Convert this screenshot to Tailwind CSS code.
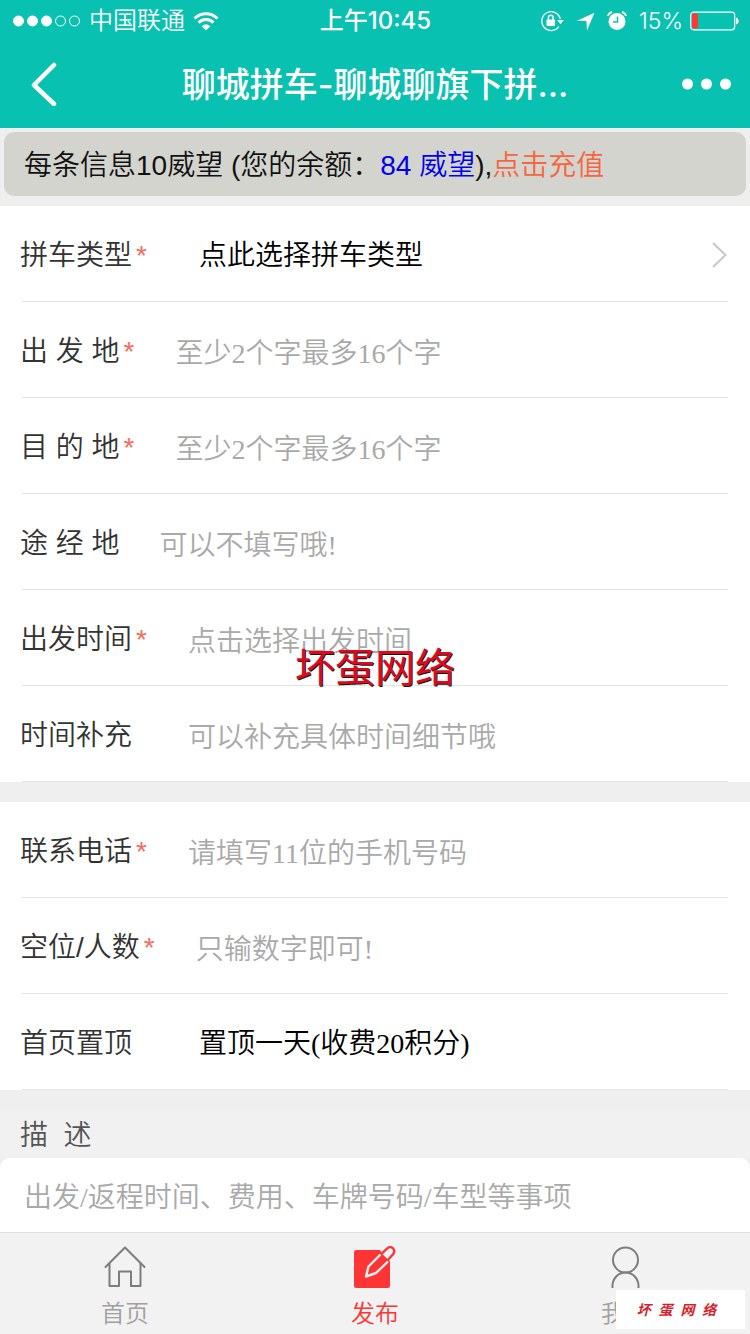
<!DOCTYPE html>
<html lang="zh-CN">
<head>
    <meta charset="UTF-8">
    <meta name="viewport" content="width=device-width, initial-scale=1.0">
    <title>聊城拼车</title>
    <script src="https://cdn.jsdelivr.net/npm/@tailwindcss/browser@4"></script>
</head>
<body class="relative min-h-screen flex flex-col bg-[#efefef] font-['Liberation_Sans','Noto_Sans_CJK_SC',sans-serif] font-[350] text-[28px] leading-10 text-[#333333]">

    <header class="bg-[#09c1b0] text-white">
        <!-- status bar -->
        <div class="h-10 pt-0.5 pl-3 pr-[11px] flex items-center text-2xl font-['Inter','Noto_Sans_CJK_SC',sans-serif]">
            <div class="flex-1 flex items-center">
                <svg class="w-[70px] h-3 mr-[7px]" viewBox="0 0 70 12" fill="#fff" stroke="#fff">
                    <circle cx="6.5" cy="6" r="5"/>
                    <circle cx="20.5" cy="6" r="5"/>
                    <circle cx="34.5" cy="6" r="5"/>
                    <circle cx="48.5" cy="6" r="5" fill="none"/>
                    <circle cx="62.5" cy="6" r="5" fill="none"/>
                </svg>
                <span>中国联通</span>
                <svg class="w-[26px] h-[19px] ml-2" viewBox="0 0 26 19" fill="none" stroke="#fff" stroke-width="3">
                    <path d="M1.5 6.5C8 .2 18 .2 24.500 6.500"/>
                    <path d="M5.500 10.600c4.300-4 10.700-4 15 0"/>
                    <path d="M13 18.500l-4.300-4.300c2.500-2.200 6.100-2.200 8.600 0z" fill="#fff" stroke="none"/>
                </svg>
            </div>
            <div class="font-medium">上午10:45</div>
            <div class="flex-1 flex items-center justify-end">
                <svg class="w-6 h-[22px] mr-3" viewBox="0 0 24 22" fill="none" stroke="#fff" stroke-width="1.300">
                    <path d="M18.800 16.600A9.400 9.400 0 1 1 20.300 9"/>
                    <path d="M17.200 10h6.600l-3.300 4.200z" fill="#fff" stroke="none"/>
                    <rect x="6.500" y="9.500" width="8.500" height="6.500" rx="1" fill="#fff" stroke="none"/>
                    <path d="M8.400 10V7.500a2.350 2.350 0 0 1 4.700 0V10" stroke-width="1.500"/>
                </svg>
                <svg class="w-[19px] h-[19px] mr-3" viewBox="0 0 19 19" fill="#fff">
                    <path d="M18.500.8L11 18.500l-.6-9.400L.5 9z"/>
                </svg>
                <svg class="w-5 h-5 mr-3" viewBox="0 0 20 20" fill="none" stroke="#fff">
                    <circle cx="10" cy="10.500" r="8.500" fill="#fff" stroke="none"/>
                    <path d="M.8 5C1.500 3 3 1.500 5 .8M19.200 5C18.500 3 17 1.500 15 .8" stroke-width="1.800"/>
                    <path d="M10.500 5.500V11H6" stroke="#09c1b0" stroke-width="1.500"/>
                </svg>
                <span class="text-[23px] font-light">15%</span>
                <svg class="w-[50px] h-5 ml-1.5" viewBox="0 0 50 20">
                    <rect x="1.700" y="1.200" width="44" height="17.600" rx="3" fill="none" stroke="#fff" stroke-width="1.200"/>
                    <rect x="3" y="2.500" width="6" height="15" rx="1" fill="#fb3b30"/>
                    <path d="M47 6.500c3.500.5 3.500 6.500 0 7z" fill="#fff"/>
                </svg>
            </div>
        </div>
        <div class="h-[88px] px-[18px] flex items-center justify-between">
            <button class="w-[50px] pl-3" aria-label="返回">
                <svg class="w-[28px] h-11" viewBox="0 0 28 44" fill="none" stroke="#fff" stroke-width="4.500" stroke-linecap="round" stroke-linejoin="round">
                    <path d="M24 3L4 23l20 19"/>
                </svg>
            </button>
            <h1 class="pt-0.5 text-[34px] font-medium font-['Inter','Noto_Sans_CJK_SC',sans-serif]">聊城拼车-聊城聊旗下拼...</h1>
            <button class="w-[50px]" aria-label="更多">
                <svg class="w-[50px] h-3" viewBox="0 0 50 12" fill="#fff">
                    <circle cx="5.500" cy="6" r="5.500"/>
                    <circle cx="24.500" cy="6" r="5.500"/>
                    <circle cx="43.500" cy="6" r="5.500"/>
                </svg>
            </button>
        </div>
    </header>

    <p class="mx-1 mt-1 mb-2.5 h-16 pt-1 px-5 flex items-center rounded-[10px] bg-[#d3d4ce] text-[#111111] whitespace-pre">每条信息10威望 (您的余额：<span class="text-[#0000ee]">84 威望</span>),<a href="#" class="text-[#f76540]">点击充值</a></p>

    <form class="flex-1 flex flex-col">
        <section class="bg-white px-[22px]">
            <div class="h-24 pt-1 flex items-center border-b border-[#e3e3e3]">
                <label for="type" class="-ml-0.5 pr-10 flex">拼车类型<span class="w-4 pl-1 text-[#fb6b5b]">*</span></label>
                <select id="type" class="flex-1 pl-[11px] appearance-none bg-transparent text-black font-['Liberation_Serif','Noto_Sans_CJK_SC',serif]">
                    <option>点此选择拼车类型</option>
                </select>
                <svg class="w-4 h-7" viewBox="0 0 16 28" fill="none" stroke="#c7c7cc" stroke-width="2">
                    <path d="M1 1l12.500 12L1 25"/>
                </svg>
            </div>
            <div class="h-24 pt-1 flex items-center border-b border-[#e3e3e3]">
                <label for="from" class="-ml-0.5 pr-10 flex">出 发 地<span class="w-4 pl-1 text-[#fb6b5b]">*</span></label>
                <input id="from" type="text" placeholder="至少2个字最多16个字" class="flex-1 min-w-0 pt-1 outline-none placeholder:text-[#a9a9a9] font-['Liberation_Serif','Noto_Sans_CJK_SC',serif]">
            </div>
            <div class="h-24 pt-1 flex items-center border-b border-[#e3e3e3]">
                <label for="to" class="-ml-0.5 pr-10 flex">目 的 地<span class="w-4 pl-1 text-[#fb6b5b]">*</span></label>
                <input id="to" type="text" placeholder="至少2个字最多16个字" class="flex-1 min-w-0 pt-1 outline-none placeholder:text-[#a9a9a9] font-['Liberation_Serif','Noto_Sans_CJK_SC',serif]">
            </div>
            <div class="h-24 pt-1 flex items-center border-b border-[#e3e3e3]">
                <label for="via" class="-ml-0.5 pr-10 flex">途 经 地</label>
                <input id="via" type="text" placeholder="可以不填写哦!" class="flex-1 min-w-0 pt-1 outline-none placeholder:text-[#a9a9a9] font-['Liberation_Serif','Noto_Sans_CJK_SC',serif]">
            </div>
            <div class="relative h-24 pt-1 flex items-center border-b border-[#e3e3e3]">
                <label for="time" class="-ml-0.5 pr-10 flex">出发时间<span class="w-4 pl-1 text-[#fb6b5b]">*</span></label>
                <input id="time" type="text" placeholder="点击选择出发时间" class="flex-1 min-w-0 pt-1 outline-none placeholder:text-[#a9a9a9] font-['Liberation_Serif','Noto_Sans_CJK_SC',serif]">
                <!-- watermark -->
                <div class="absolute inset-x-0 top-14 text-center text-[40px] leading-[44px] font-normal text-[#e0081c] [text-shadow:1px_1px_0_#111111] pointer-events-none">坏蛋网络</div>
            </div>
            <div class="h-24 pt-1 flex items-center border-b border-[#e3e3e3]">
                <label for="note" class="-ml-0.5 pr-14 flex">时间补充</label>
                <input id="note" type="text" placeholder="可以补充具体时间细节哦" class="flex-1 min-w-0 pt-1 outline-none placeholder:text-[#a9a9a9] font-['Liberation_Serif','Noto_Sans_CJK_SC',serif]">
            </div>
        </section>

        <section class="mt-5 bg-white px-[22px]">
            <div class="h-24 pt-1 flex items-center border-b border-[#e3e3e3]">
                <label for="phone" class="-ml-0.5 pr-10 flex">联系电话<span class="w-4 pl-1 text-[#fb6b5b]">*</span></label>
                <input id="phone" type="tel" placeholder="请填写11位的手机号码" class="flex-1 min-w-0 pt-1 outline-none placeholder:text-[#a9a9a9] font-['Liberation_Serif','Noto_Sans_CJK_SC',serif]">
            </div>
            <div class="h-24 pt-1 flex items-center border-b border-[#e3e3e3]">
                <label for="seats" class="-ml-0.5 pr-10 flex">空位/人数<span class="w-4 pl-1 text-[#fb6b5b]">*</span></label>
                <input id="seats" type="text" placeholder="只输数字即可!" class="flex-1 min-w-0 pt-1 outline-none placeholder:text-[#a9a9a9] font-['Liberation_Serif','Noto_Sans_CJK_SC',serif]">
            </div>
            <div class="h-24 pt-1 flex items-center border-b border-[#e3e3e3]">
                <label for="top" class="-ml-0.5 pr-14 flex">首页置顶</label>
                <select id="top" class="flex-1 pl-[11px] appearance-none bg-transparent text-black font-['Liberation_Serif','Noto_Sans_CJK_SC',serif]">
                    <option>置顶一天(收费20积分)</option>
                </select>
            </div>
        </section>

        <label for="desc" class="mt-5 h-12 px-5 pt-1.5 bg-[#f1f1f1] text-[#555555]">描&nbsp;&nbsp;述</label>
        <textarea id="desc" rows="1" placeholder="出发/返程时间、费用、车牌号码/车型等事项" class="flex-1 px-6 pt-5 rounded-t-[10px] bg-white outline-none resize-none placeholder:text-[#a9a9a9] font-['Liberation_Serif','Noto_Sans_CJK_SC',serif]"></textarea>
    </form>

    <nav class="relative h-[102px] grid grid-cols-3 bg-[#f2f2f2] border-t border-[#e3e3e3] text-2xl text-[#a0a0a0]">
        <a href="#" class="pt-[13px] flex flex-col items-center gap-2">
            <svg class="w-[42px] h-[42px]" viewBox="0 0 42 42" fill="none" stroke="#7d7d7d" stroke-width="2" stroke-linejoin="round" stroke-linecap="round">
                <path d="M1.500 21L21 1.500 40.500 21"/>
                <path d="M5.500 17.500V40h9.500V25.500h12V40h9.500V17.500"/>
            </svg>
            <span class="leading-9">首页</span>
        </a>
        <a href="#" class="pt-[13px] flex flex-col items-center gap-2 text-[#ff3535]">
            <svg class="w-[42px] h-[42px]" viewBox="0 0 42 42">
                <rect y="4" width="36" height="38" rx="2.500" fill="#ff3535"/>
                <path d="M25 2.500l3 4.500 7.500 8 3 2V2.500z" fill="#f2f2f2"/>
                <path d="M26.500 8.500L14.500 20.500 12 30.500l10-3.500L34 15.500" fill="#ff3535" stroke="#f2f2f2" stroke-width="2.400" stroke-linejoin="round"/>
                <path d="M27.800 7.800L33 2.700c2-2 4.400-1.800 6-.3 1.700 1.600 1.800 4 0 5.900L34.300 13.500z" fill="#f2f2f2"/>
                <path d="M27.200 8.200L33 2.700c2-2 4.400-1.800 6-.3 1.700 1.600 1.800 4 0 5.900L33.700 14.300" fill="none" stroke="#ff3535" stroke-width="2.400"/>
                <path d="M28 10l4.500 4.500" stroke="#ff3535" stroke-width="2"/>
            </svg>
            <span class="leading-9">发布</span>
        </a>
        <a href="#" class="pt-[13px] flex flex-col items-center gap-2">
            <svg class="w-[42px] h-[42px]" viewBox="0 0 42 42" fill="none" stroke="#7d7d7d" stroke-width="2">
                <circle cx="21.500" cy="14" r="12.500"/>
                <path d="M8.500 42v-2c0-7.500 5.500-13.500 13-13.500s13 6 13 13.500v2"/>
            </svg>
            <span class="leading-9">我的</span>
        </a>
        <div class="absolute right-[5px] bottom-[5px] w-[129px] h-[39px] pr-2 flex items-center justify-center bg-white text-sm font-bold italic text-[#d81e2c]">坏&nbsp;&nbsp;蛋&nbsp;&nbsp;网&nbsp;&nbsp;络</div>
    </nav>

</body>
</html>
